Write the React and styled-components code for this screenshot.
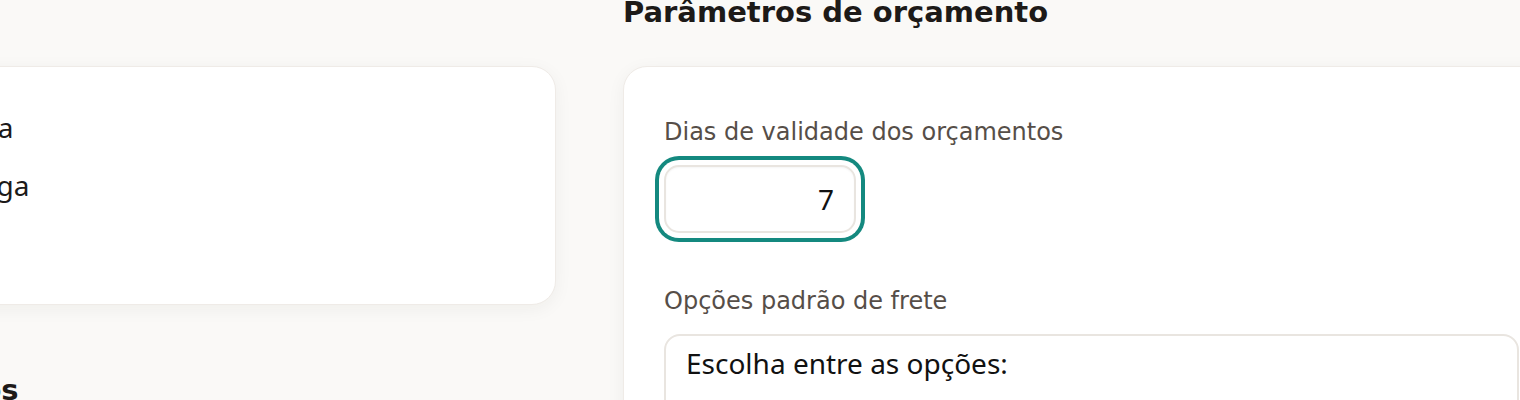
import React from "react";
import styled, { createGlobalStyle } from "styled-components";

const GlobalStyle = createGlobalStyle`
  html, body {
    margin: 0;
    padding: 0;
    background: #faf9f7;
    overflow: hidden;
  }
  body {
    font-family: "Noto Sans", "Open Sans", sans-serif;
    color: #1c1a19;
  }
  * { box-sizing: border-box; }
`;

const Page = styled.div`
  display: grid;
  grid-template-columns: 937px 937px;
  column-gap: 67px;
  align-items: start;
  margin: -6px 0 0 -381px;
  width: max-content;
`;

const Column = styled.section`
  display: flex;
  flex-direction: column;
  padding-top: ${(p) => p.$offset || "0"};
`;

const SectionTitle = styled.h2`
  margin: ${(p) => (p.$spaced ? "67px" : "0")} 0 36px;
  font-family: "DejaVu Sans", Inter, sans-serif;
  font-size: 29px;
  line-height: 36px;
  font-weight: 700;
  color: #1d1a18;
  white-space: nowrap;
`;

const Card = styled.div`
  background: #ffffff;
  border: 1px solid #efebe7;
  border-radius: 24px;
  box-shadow: 0 4px 18px rgba(40, 30, 20, 0.05);
  padding: ${(p) => p.$pad || "40px"};
`;

const OptionList = styled.ul`
  list-style: none;
  margin: 0;
  padding: 0;
  display: flex;
  flex-direction: column;
  gap: 16px;
`;

const OptionItem = styled.li`
  font-size: 28px;
  line-height: 42px;
  color: #1c1a19;
  white-space: nowrap;
`;

const Field = styled.div`
  display: flex;
  flex-direction: column;
  align-items: flex-start;
  & + & {
    margin-top: 53px;
  }
`;

const Label = styled.label`
  font-family: "DejaVu Sans", Inter, sans-serif;
  font-size: 24px;
  line-height: 30px;
  font-weight: 400;
  color: #564e48;
  margin-bottom: 18px;
`;

const NumberInput = styled.input`
  width: 192px;
  height: 68px;
  border: 2px solid #e9e5e0;
  border-radius: 15px;
  background: #ffffff;
  padding: 0 20px;
  text-align: right;
  font-family: "Noto Sans", "Open Sans", sans-serif;
  font-size: 28px;
  color: #111;
  outline: none;
  box-shadow: inset 0 1px 2px rgba(0, 0, 0, 0.04), 0 0 0 5px #ffffff, 0 0 0 9px #14897f;
`;

const TextBox = styled.div`
  align-self: stretch;
  border: 2px solid #e9e5e0;
  border-radius: 16px;
  padding: 9px 20px 60px;
  font-family: "Noto Sans", "Open Sans", sans-serif;
  font-size: 28px;
  line-height: 36px;
  color: #111;
  background: #fff;
`;

export default function App() {
  return (
    <>
      <GlobalStyle />
      <Page>
        <Column $offset="72px">
          <Card $pad="39px 40px 40px 35px">
            <OptionList>
              <OptionItem>Permitir agendar a retirada</OptionItem>
              <OptionItem>Informar o prazo de entrega</OptionItem>
              <OptionItem>Frete grátis</OptionItem>
            </OptionList>
          </Card>
          <SectionTitle $spaced>Configurações de envios</SectionTitle>
        </Column>
        <Column>
          <SectionTitle>Parâmetros de orçamento</SectionTitle>
          <Card $pad="50px 40px 40px">
            <Field>
              <Label htmlFor="validade">Dias de validade dos orçamentos</Label>
              <NumberInput id="validade" type="text" defaultValue="7" />
            </Field>
            <Field>
              <Label>Opções padrão de frete</Label>
              <TextBox>Escolha entre as opções:</TextBox>
            </Field>
          </Card>
        </Column>
      </Page>
    </>
  );
}
